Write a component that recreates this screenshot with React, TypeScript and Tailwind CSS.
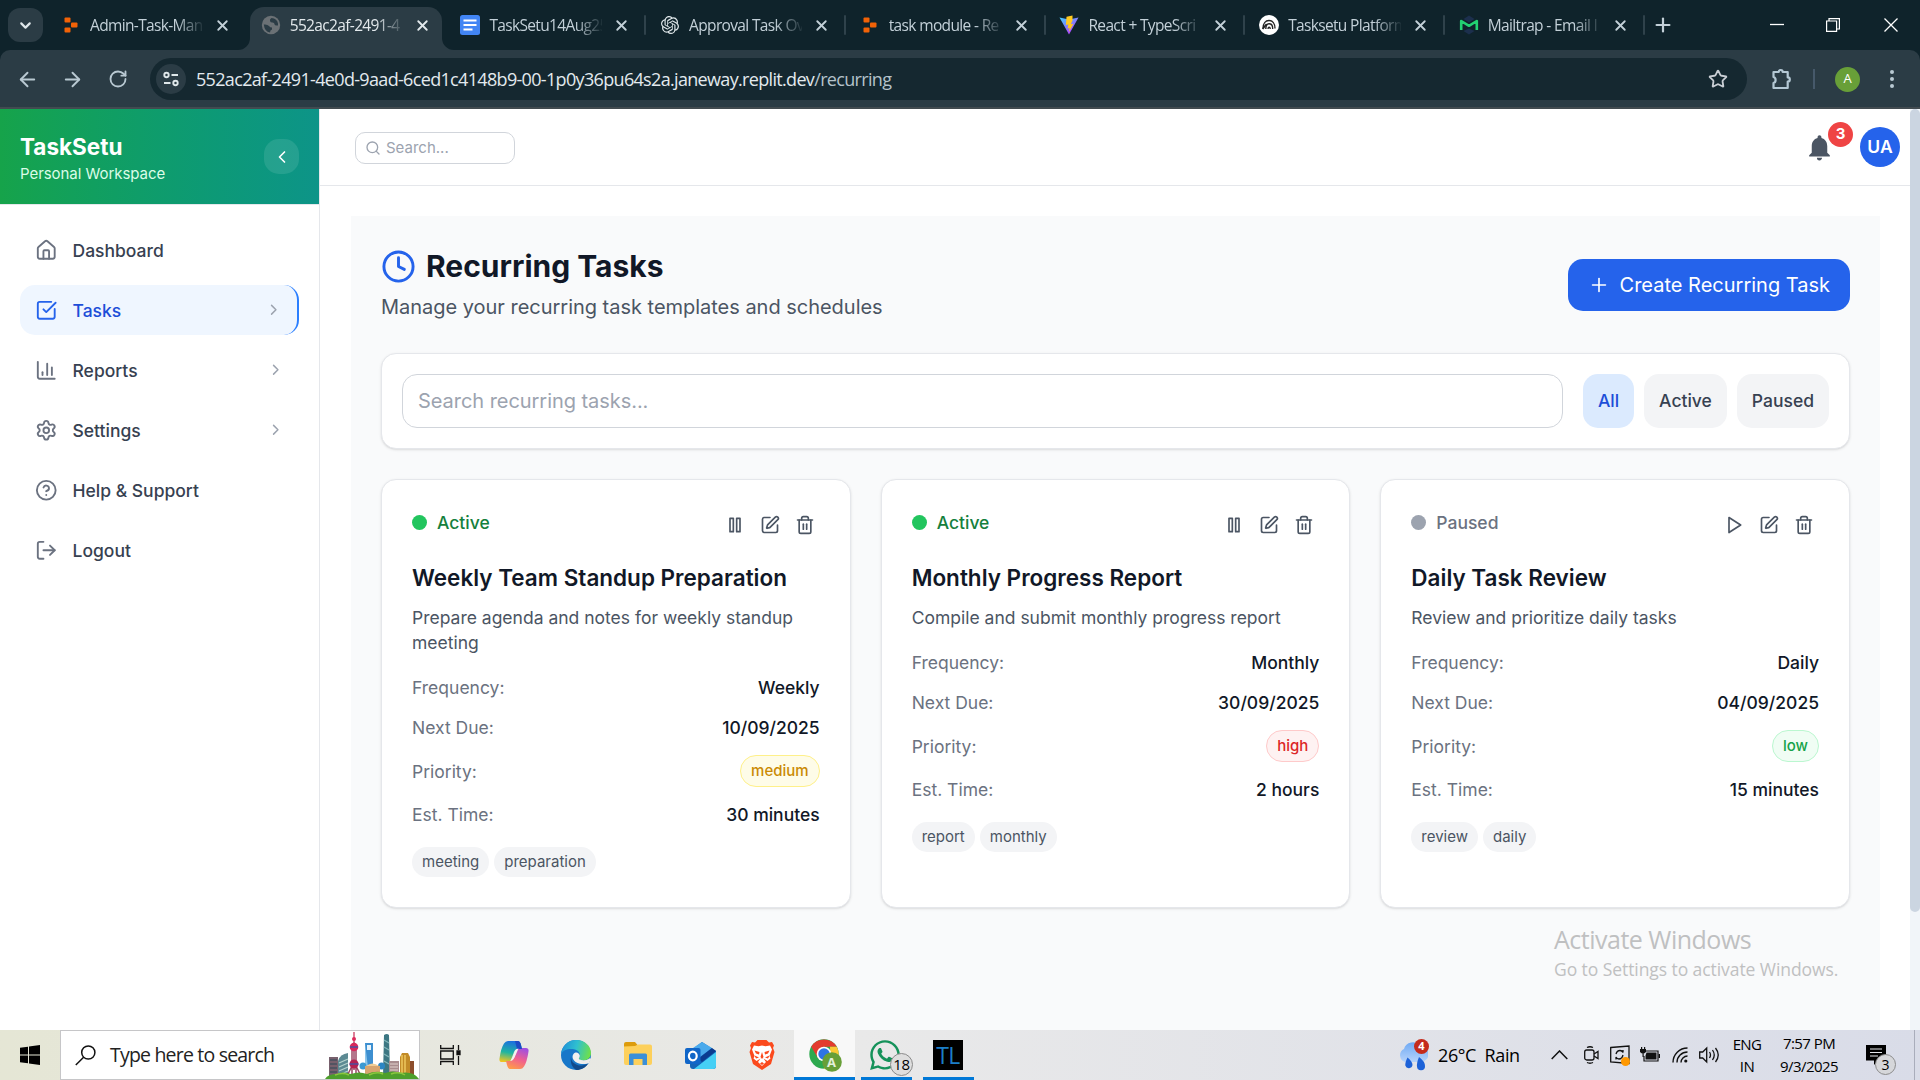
import React from "react";
import {
  House, SquareCheckBig, ChartColumn, Settings, CircleQuestionMark, LogOut, ChevronRight, ChevronLeft,
  Search, Clock, Plus, SquarePen, Trash2, X, ArrowLeft, ArrowRight, ChevronDown, RotateCw, Star,
} from "lucide-react";
import { SiOpenai } from "react-icons/si";
import { FaWhatsapp } from "react-icons/fa";
import { MdNotifications } from "react-icons/md";

/* ---------- Browser chrome ---------- */

const ReplitIcon = () => (
  <svg width="20" height="20" viewBox="0 0 20 20" fill="#f26207">
    <rect x="3.5" y="2.5" width="6" height="5" rx="1" />
    <rect x="10" y="7.6" width="6.5" height="5" rx="1" />
    <rect x="3.5" y="12.6" width="6" height="5" rx="1" />
  </svg>
);

const GlobeIcon = () => (
  <svg width="20" height="20" viewBox="0 0 20 20">
    <circle cx="10" cy="10" r="9.2" fill="#6b7175" />
    <path d="M2.800 9.500q3.500-.5 5.200 1.500 1 1.500 3 1.600v2q-2 .4-2 2.900-5.500-1-6.200-8zM10.500 3q-2 1-1.500 3 .3 1.500 2.500 1.500 2 .2 2 1.800t3.500 1.200q.5-5-4-7z" fill="#2b3c45" />
  </svg>
);

const DocsIcon = () => (
  <svg width="20" height="20" viewBox="0 0 20 20">
    <rect width="20" height="20" rx="2.500" fill="#4285f4" />
    <path d="M3.500 5.500h13M3.500 10h13M3.500 14.500h9" stroke="#fff" strokeWidth="2" />
  </svg>
);

const ViteIcon = () => (
  <svg width="20" height="20" viewBox="0 0 20 20">
    <defs>
      <linearGradient id="vite" x1="0" y1="0" x2="0.700" y2="1">
        <stop offset="0" stopColor="#41d1ff" />
        <stop offset="1" stopColor="#bd34fe" />
      </linearGradient>
    </defs>
    <path d="M.5 2.500l9.500 17 9.500-17L10 4.500z" fill="url(#vite)" />
    <path d="M13.500.5L7.500 1.700l-.6 8.300 2.400-.5-.7 4 2-.6-.8 4.300 4.600-8.400-2.600.4 1.700-3.800z" fill="#ffc91f" />
  </svg>
);

const ArcsIcon = () => (
  <svg width="20" height="20" viewBox="0 0 20 20">
    <circle cx="10" cy="10" r="10" fill="#fff" />
    <path d="M4 13.500c0-5 2.500-8 6-8s6 3 6 8M6.800 14c0-3.500 1.300-5.300 3.200-5.300s3.700 1.800 3.700 5.300M9 14c.2-2.300 2-2.300 2.300 0" stroke="#222" strokeWidth="1.400" fill="none" />
    <path d="M3.600 14l4-5" stroke="#222" strokeWidth="1.800" />
  </svg>
);

const MailtrapIcon = () => (
  <svg width="20" height="20" viewBox="0 0 20 20">
    <path d="M4.500 4L10 .5 15.500 4 10 7.500z M4.500 16l5.500 3.500 5.500-3.500-5.500-2.500z" fill="#1c2f4d" />
    <path d="M2.200 15V6l7.800 4.800L17.800 6v9" stroke="#22d172" strokeWidth="2.600" fill="none" strokeLinejoin="round" />
  </svg>
);

const tabs = [
  { title: "Admin-Task-Man", icon: <ReplitIcon />, sep: false },
  { title: "552ac2af-2491-4", icon: <GlobeIcon />, sep: false, active: true },
  { title: "TaskSetu14Aug25", icon: <DocsIcon />, sep: true },
  { title: "Approval Task Ov", icon: <SiOpenai size={18} color="#dfe7ea" />, sep: true },
  { title: "task module - Re", icon: <ReplitIcon />, sep: true },
  { title: "React + TypeScri", icon: <ViteIcon />, sep: true },
  { title: "Tasksetu Platform", icon: <ArcsIcon />, sep: true },
  { title: "Mailtrap - Email I", icon: <MailtrapIcon />, sep: true },
];

function TabStrip() {
  return (
    <div className="flex h-[50px] shrink-0 items-center bg-[#0f232b] text-[#c3d0d8]">
      <div className="ml-2 flex h-[34px] w-[35px] items-center justify-center rounded-xl bg-[#2b3c45]">
        <ChevronDown size={17} strokeWidth={3} color="#dfe7ea" />
      </div>
      <div className="ml-[7px] flex h-full">
        {tabs.map((t) => (
          <div key={t.title} className="flex h-full w-[199.7px] items-end">
            <div className={t.active ? "relative flex h-[43px] w-[192px] items-center rounded-t-[14px] bg-[#2b3c45] pb-[7px] text-[#e3e9ec]" : "flex h-[43px] w-[192px] items-center pb-[7px]"}>
              {t.active && (
                <>
                  <svg className="absolute bottom-0 -left-3" width="12" height="12"><path d="M12 0v12H0A12 12 0 0 0 12 0z" fill="#2b3c45" /></svg>
                  <svg className="absolute -right-3 bottom-0" width="12" height="12"><path d="M0 0v12h12A12 12 0 0 1 0 0z" fill="#2b3c45" /></svg>
                </>
              )}
              <div className="ml-[11px] flex w-5 shrink-0 justify-center">{t.icon}</div>
              <div className="ml-[9px] w-[113px] shrink-0 text-[15.5px] leading-6 tracking-[-0.65px] whitespace-nowrap [mask-image:linear-gradient(to_right,black_76%,transparent_102%)]">
                {t.title}
              </div>
              <X className="ml-[11px] shrink-0" size={17} strokeWidth={2.6} />
            </div>
            {t.sep && <div className="mb-[15px] ml-[3px] h-5 w-[2px] rounded bg-[#2f424b]" />}
          </div>
        ))}
      </div>
      <Plus className="ml-1" size={22} strokeWidth={2.4} />
      <div className="ml-auto flex items-center text-white">
        <svg width="14" height="14"><path d="M0 6.500h14" stroke="#fff" strokeWidth="1.300" /></svg>
        <svg className="ml-[42px]" width="14" height="14" fill="none" stroke="#fff" strokeWidth="1.200"><path d="M.6 3h10v10.400h-10zM3 3V.6h10.400V11h-2.800" /></svg>
        <svg className="mr-[22px] ml-[44px]" width="14" height="14"><path d="M.5.5l13 13M13.500.5l-13 13" stroke="#fff" strokeWidth="1.300" /></svg>
      </div>
    </div>
  );
}

function Toolbar() {
  return (
    <div className="h-[59px] shrink-0 bg-[#0f232b]">
      <div className="flex h-full items-center rounded-t-[10px] border-b-2 border-[#424b50] bg-[#2b3c45] pt-px text-[#b9c9d2]">
        <ArrowLeft className="ml-4" size={23} strokeWidth={2} />
        <ArrowRight className="ml-[22px]" size={23} strokeWidth={2} />
        <RotateCw className="ml-[24px]" size={20} strokeWidth={2.200} />
        <div className="ml-[22px] flex h-[42px] w-[1597px] items-center rounded-full bg-[#152830]">
          <div className="ml-[6px] flex size-[30px] items-center justify-center rounded-full bg-[#2b3c45]">
            <svg width="18" height="18" viewBox="0 0 18 18" fill="none" stroke="#dfe7ea" strokeWidth="1.900">
              <circle cx="4.500" cy="5" r="2.200" /><path d="M9.500 5H16M2 13h6.500" /><circle cx="13.500" cy="13" r="2.200" />
            </svg>
          </div>
          <div className="ml-[10px] text-[18px] tracking-[-0.67px] whitespace-nowrap text-[#e3eaee]">
            552ac2af-2491-4e0d-9aad-6ced1c4148b9-00-1p0y36pu64s2a.janeway.replit.dev<span className="text-[#b4c2ca]">/recurring</span>
          </div>
          <Star className="mr-[19px] ml-auto" size={20} strokeWidth={2.200} color="#c9ced4" />
        </div>
        <svg className="ml-[23px]" width="24" height="24" viewBox="0 0 24 24" fill="none" stroke="#b4c8d4" strokeWidth="2.200" strokeLinejoin="round">
          <path d="M3.500 5h5.200a2 2 0 0 1 4 0h5v5.400a2 2 0 0 1 0 4.200V21H3.500v-5c2.800-.7 2.800-5.300 0-6z" />
        </svg>
        <div className="ml-[19px] h-5 w-[2px] bg-[#46596a]" />
        <div className="ml-[20px] flex size-[25px] items-center justify-center rounded-full bg-[#689f38] text-[13px] text-white">A</div>
        <svg className="ml-[29px]" width="6" height="20" fill="#b9c9d2"><circle cx="3" cy="3" r="2" /><circle cx="3" cy="10" r="2" /><circle cx="3" cy="17" r="2" /></svg>
      </div>
    </div>
  );
}

/* ---------- Application ---------- */

const nav = [
  { label: "Dashboard", Icon: House },
  { label: "Tasks", Icon: SquareCheckBig, more: true, active: true },
  { label: "Reports", Icon: ChartColumn, more: true },
  { label: "Settings", Icon: Settings, more: true },
  { label: "Help & Support", Icon: CircleQuestionMark },
  { label: "Logout", Icon: LogOut },
];

function Sidebar() {
  return (
    <aside className="flex w-[320px] shrink-0 flex-col border-r border-gray-200 bg-white">
      <div className="flex h-24 items-center justify-between border-b border-gray-200 bg-gradient-to-r from-[#16a34a] to-[#0d9488] px-5">
        <div className="pt-[5px]">
          <div className="text-[22.5px] leading-[30px] font-bold text-white">TaskSetu</div>
          <div className="text-[15px] leading-6 tracking-[-0.05px] text-green-100">Personal Workspace</div>
        </div>
        <div className="flex size-[35px] items-center justify-center rounded-[15px] bg-white/10">
          <ChevronLeft size={20} color="#fff" />
        </div>
      </div>
      <nav className="flex flex-col gap-2.5 px-5 pt-5">
        {nav.map(({ label, Icon, more, active }) => (
          <div
            key={label}
            className={
              active
                ? "flex h-[50px] items-center rounded-[15px] border-r-2 border-blue-500 bg-[#eff6ff] px-[15px] text-[#1d4ed8]"
                : "flex h-[50px] items-center rounded-[15px] px-[15px] text-[#374151]"
            }
          >
            <Icon size={22.5} className={active ? "text-[#2563eb]" : "text-[#6b7280]"} />
            <span className="ml-[15px] pt-[2px] text-[17.5px] font-medium">{label}</span>
            {more && <ChevronRight className="ml-auto text-[#9ca3af]" size={17.5} />}
          </div>
        ))}
      </nav>
    </aside>
  );
}

function TopBar() {
  return (
    <header className="flex h-[77px] shrink-0 items-center justify-between border-b border-[#e5e7eb] pr-2.5 pl-[35px]">
      <div className="mt-[2px] flex h-8 w-[160px] items-center rounded-[10px] border border-[#d1d5db] pl-[9px]">
        <Search size={16} className="text-[#9ca3af]" />
        <span className="ml-[5px] text-[15px] text-[#9ca3af]">Search...</span>
      </div>
      <div className="flex items-center">
        <div className="relative mr-[25px]">
          <MdNotifications size={31} className="text-[#4b5563]" />
          <div className="absolute -top-[10px] left-[24px] flex size-[25px] items-center justify-center rounded-full bg-[#ef4444] text-[15px] font-bold text-white">3</div>
        </div>
        <div className="flex size-10 items-center justify-center rounded-full bg-[#2563eb] pt-px text-[17.5px] font-semibold text-white">UA</div>
      </div>
    </header>
  );
}

type Task = {
  status: "Active" | "Paused";
  title: string;
  desc: string;
  freq: string;
  due: string;
  priority: "medium" | "high" | "low";
  time: string;
  tags: string[];
};

const tasks: Task[] = [
  { status: "Active", title: "Weekly Team Standup Preparation", desc: "Prepare agenda and notes for weekly standup meeting", freq: "Weekly", due: "10/09/2025", priority: "medium", time: "30 minutes", tags: ["meeting", "preparation"] },
  { status: "Active", title: "Monthly Progress Report", desc: "Compile and submit monthly progress report", freq: "Monthly", due: "30/09/2025", priority: "high", time: "2 hours", tags: ["report", "monthly"] },
  { status: "Paused", title: "Daily Task Review", desc: "Review and prioritize daily tasks", freq: "Daily", due: "04/09/2025", priority: "low", time: "15 minutes", tags: ["review", "daily"] },
];

const priorityStyle = {
  medium: "border-[#fef08a] bg-[#fefce8] text-[#ca8a04]",
  high: "border-[#fecaca] bg-[#fef2f2] text-[#dc2626]",
  low: "border-[#bbf7d0] bg-[#f0fdf4] text-[#16a34a]",
};

const PauseIcon = () => (
  <svg width="20" height="20" viewBox="0 0 24 24" fill="none" stroke="currentColor" strokeWidth="2" strokeLinejoin="round">
    <rect x="6" y="4" width="4" height="16" />
    <rect x="14" y="4" width="4" height="16" />
  </svg>
);

const PlayIcon = () => (
  <svg width="20" height="20" viewBox="0 0 24 24" fill="none" stroke="currentColor" strokeWidth="2" strokeLinejoin="round">
    <path d="M6 3l14 9-14 9z" />
  </svg>
);

function Row({ label, children }: { label: string; children: React.ReactNode }) {
  return (
    <div className="flex items-center justify-between">
      <span className="text-[#6b7280]">{label}</span>
      {children}
    </div>
  );
}

function TaskCard({ task }: { task: Task }) {
  const active = task.status === "Active";
  return (
    <div className="rounded-[15px] border border-[#e5e7eb] bg-white p-[30px] text-[17.5px] leading-[25px] shadow-sm">
      <div className="flex items-start justify-between">
        <div className="flex items-center gap-2.5">
          <span className={active ? "size-[15px] rounded-full bg-[#22c55e]" : "size-[15px] rounded-full bg-[#9ca3af]"} />
          <span className={active ? "font-medium text-[#15803d]" : "font-medium text-[#6b7280]"}>{task.status}</span>
        </div>
        <div className="flex gap-[5px] text-[#4b5563]">
          <span className="p-[5px]">{active ? <PauseIcon /> : <PlayIcon />}</span>
          <span className="p-[5px]"><SquarePen size={20} /></span>
          <span className="p-[5px]"><Trash2 size={20} /></span>
        </div>
      </div>
      <h3 className="mt-5 text-[22.5px] leading-[35px] font-semibold text-[#111827]">{task.title}</h3>
      <p className="mt-2.5 text-[#4b5563]">{task.desc}</p>
      <div className="mt-5 flex flex-col gap-[15px] text-[#111827]">
        <Row label="Frequency:"><span className="font-medium">{task.freq}</span></Row>
        <Row label="Next Due:"><span className="font-medium">{task.due}</span></Row>
        <Row label="Priority:">
          <span className={`flex h-8 items-center rounded-full border px-2.5 pb-px text-[15px] font-medium ${priorityStyle[task.priority]}`}>{task.priority}</span>
        </Row>
        <Row label="Est. Time:"><span className="font-medium">{task.time}</span></Row>
      </div>
      <div className="mt-5 flex gap-[5px]">
        {task.tags.map((t) => (
          <span key={t} className="flex h-[30px] items-center rounded-full bg-[#f3f4f6] px-2.5 pb-px text-[15px] text-[#4b5563]">{t}</span>
        ))}
      </div>
    </div>
  );
}

function RecurringTasks() {
  return (
    <div className="flex min-h-0 flex-1 overflow-hidden pt-[30px] pr-[30px] pl-[31px]">
      <div className="w-full bg-[#f9fafb] p-[30px]">
        <div className="flex items-center justify-between">
          <div>
            <div className="flex h-10 items-center">
              <Clock size={35} className="text-[#2563eb]" />
              <h1 className="ml-2.5 text-[30px] leading-10 font-bold text-[#111827]">Recurring Tasks</h1>
            </div>
            <p className="mt-[6px] mb-[1px] text-[20px] leading-[30px] tracking-[-0.02px] text-[#4b5563]">Manage your recurring task templates and schedules</p>
          </div>
          <div className="flex h-[52px] items-center rounded-[15px] bg-[#2563eb] px-5 text-[20px] text-white">
            <Plus size={22} strokeWidth={1.800} />
            <span className="ml-[10px] font-normal">Create Recurring Task</span>
          </div>
        </div>
        <div className="mt-[30px] flex h-24 items-center rounded-[15px] border border-[#e5e7eb] bg-white px-5 shadow-sm">
          <div className="flex h-[54px] flex-1 items-center rounded-[15px] border border-[#d1d5db] px-[15px] text-[20px] tracking-[-0.05px] text-[#9ca3af]">Search recurring tasks...</div>
          <div className="ml-5 flex gap-2.5 text-[17.5px] font-medium text-[#374151]">
            <div className="flex h-[54px] items-center rounded-[15px] bg-[#dbeafe] px-[15px] pt-px text-[#1d4ed8]">All</div>
            <div className="flex h-[54px] items-center rounded-[15px] bg-[#f3f4f6] px-[15px] pt-px">Active</div>
            <div className="flex h-[54px] items-center rounded-[15px] bg-[#f3f4f6] px-[15px] pt-px">Paused</div>
          </div>
        </div>
        <div className="mt-[30px] grid grid-cols-3 gap-[30px]">
          {tasks.map((t) => <TaskCard key={t.title} task={t} />)}
        </div>
      </div>
    </div>
  );
}

/* ---------- Windows taskbar ---------- */

const Skyline = () => (
  <svg width="94" height="49" viewBox="0 0 94 49">
    <rect x="4" y="27" width="9" height="20" fill="#77606d" />
    <path d="M5 30h7M5 34h7M5 38h7M5 42h7" stroke="#47505f" strokeWidth="1.500" />
    <path d="M13 46V31q2-7 10-8v23z" fill="#5c8a93" />
    <path d="M14 33l9-4M14 37l9-4M14 41l9-4M14 45l9-4" stroke="#b4d2cd" strokeWidth="1.300" />
    <path d="M29 2v10" stroke="#c42a52" strokeWidth="1.200" />
    <path d="M29 12v28M27 20v25M31 20v25M27 36l-5 10M31 36l5 10" stroke="#9a4a66" strokeWidth="1.500" />
    <circle cx="29" cy="9" r="2" fill="#dd2c5c" />
    <circle cx="29" cy="17" r="4.300" fill="#d9285b" />
    <circle cx="29" cy="34" r="4.500" fill="#b42352" />
    <path d="M25 17h8M24.500 34h9" stroke="#4a4fa0" strokeWidth="1.300" />
    <path d="M40 46V13h8v33z" fill="#3d8fd0" />
    <path d="M42 15h4v5h-4z" fill="#e9f4fb" />
    <path d="M40 13l4 33h-4z" fill="#8cc6ea" />
    <path d="M58 46l1-41q3-2 5 0l1 41z" fill="#3d7783" />
    <path d="M59 10l5 3M59 17l5 3M59 24l5 3M59 31l5 3" stroke="#83b6ba" strokeWidth="1.300" />
    <circle cx="38" cy="36" r="3.500" fill="#3c9ad3" />
    <circle cx="56.500" cy="36" r="3.500" fill="#2c86c4" />
    <rect x="40" y="36" width="15" height="10" fill="#d7a570" />
    <path d="M41 36q6.500-5 13 0z" fill="#efcd96" />
    <rect x="64" y="31" width="10" height="15" fill="#a98d8f" />
    <path d="M65 34h8M65 37h8M65 40h8" stroke="#e3d3cd" strokeWidth="1" />
    <path d="M75 46V27l2-4h6l2 4v19z" fill="#c28b28" />
    <path d="M77 25v21M80 25v21" stroke="#f1cc63" strokeWidth="1.400" />
    <rect x="85" y="31" width="4" height="15" fill="#8d4e2c" />
    <path d="M0 49q3-5 12-5 6-3 14 0 8-3 16 0 9-4 18-1 8-3 16 0 12-2 18 6z" fill="#4d9f2c" />
    <path d="M10 45q8-3 14 0M44 45q8-4 14-1M66 44q8-3 14 1" stroke="#8cc63e" strokeWidth="1.500" fill="none" />
  </svg>
);

const CopilotIcon = () => (
  <svg width="30" height="30" viewBox="0 0 30 30">
    <defs>
      <linearGradient id="cpa" x1="0.500" y1="0" x2="0.300" y2="1"><stop offset="0" stopColor="#1a6fe0" /><stop offset="0.550" stopColor="#20b5a0" /><stop offset="1" stopColor="#f0c520" /></linearGradient>
      <linearGradient id="cpb" x1="0.700" y1="0" x2="0.300" y2="1"><stop offset="0" stopColor="#a050e0" /><stop offset="0.500" stopColor="#f06090" /><stop offset="1" stopColor="#ff9a4a" /></linearGradient>
    </defs>
    <path d="M9 1h10q2 0 3 4l1 4h-4q-3 0-4 3l-3 8q-1 2-4 2H3q-3 0-2.500-3.500Q2 8 5 3.500 6.500 1 9 1z" fill="url(#cpa)" />
    <path d="M21 29H11q-2 0-3-4l-1-4h4q3 0 4-3l3-8q1-2 4-2h5q3 0 2.500 3.500Q28 22 25 26.500 23.500 29 21 29z" fill="url(#cpb)" />
    <path d="M16 1h3q2 0 3 4l1 4h-5z" fill="#1c4bc4" />
    <path d="M13.500 17.500l3-7.500q1-1.500 3-1.500l-4 9q-1.500 3-4 3z" fill="#f4f3ef" />
  </svg>
);

const EdgeIcon = () => (
  <svg width="30" height="30" viewBox="0 0 30 30">
    <defs>
      <linearGradient id="eg" x1="0" y1="0.300" x2="1" y2="0.500"><stop offset="0" stopColor="#1f8fd8" /><stop offset="0.500" stopColor="#2fc0d0" /><stop offset="1" stopColor="#6fe04a" /></linearGradient>
    </defs>
    <circle cx="15" cy="15" r="15" fill="#1877c9" />
    <path d="M0 14C1 6 7 0 15 0c9 0 15 6 15 13 0 5-4 7.500-8 7.500-3 0-4.500-1-4-2.500 2-2.500 1-7-4-8.500C8 8 2 10 0 14z" fill="url(#eg)" />
    <path d="M10 17c0 6 6 9 11 8.500 3-.3 5-1.500 6.500-2.500C25 27.500 20 30 15.500 30 11 28 9 22 10 17z" fill="#114a8b" />
    <path d="M14.500 12.500c-3 1-4 5-1.500 8 3 3.500 9 4.500 14.500 2l2.500-3.500-3 .5c-3 1.500-8 1-9-.5-.6-1 1-1.500.8-3.500-.2-2-2.300-3.500-4.300-3z" fill="#f1f1ef" />
    <path d="M19 19.500c2 2 7 1.500 10-1.500l1 1-2 4c-4 2-9 1-9-3.500z" fill="#ecebea" />
  </svg>
);

const ExplorerIcon = () => (
  <svg width="28" height="26" viewBox="0 0 28 26">
    <path d="M0 2q0-2 2-2h9l2.500 3V8H0z" fill="#dd9c0c" />
    <path d="M0 4.500l11-.5 3-1.500h12q2 0 2 2V21q0 2-2 2H2q-2 0-2-2z" fill="#fdd05b" />
    <path d="M5 13q0-1.500 1.500-1.500h15q1.500 0 1.500 1.500v10h-4.500v-6h-9v6H5z" fill="#3b8fd8" />
  </svg>
);

const OutlookIcon = () => (
  <svg width="31" height="27" viewBox="0 0 31 27">
    <path d="M17 0l14 9v15q0 3-3 3H8q-3 0-3-3V9z" fill="#1465b8" />
    <path d="M17 0l10 6-16 12-6-7V8z" fill="#4aaaec" />
    <path d="M31 10v14q0 3-3 3H9l13-10z" fill="#45cff5" />
    <path d="M27 6l4 3-14 11-4-3z" fill="#0b3c90" />
    <rect y="6" width="15.500" height="16" rx="2" fill="#1066c8" />
    <ellipse cx="7.800" cy="14" rx="3.900" ry="4.300" fill="none" stroke="#fff" strokeWidth="2.200" />
  </svg>
);

const BraveIcon = () => (
  <svg width="26" height="30" viewBox="0 0 26 30">
    <path d="M8.500 0h9l2.500 2.500 3-.5 2 3.500-1 2.500 1.500 4-3.500 12L13 30 4 24 .5 12 2 8 1 5.500 3 2l3 .5z" fill="#fb4a1d" />
    <path d="M5 5.500l4.500.8L13 5.500l3.500.8 4.500-.8 2 4-2.500 6.500 1 2.500-3 2.500-4-2.500 2.500 3.500-4 4-4-4 2.500-3.500-4 2.500-3-2.500 1-2.500L3 9.500z" fill="#fff" />
    <path d="M5.500 10.500l5 1.500-.5 2.500-3-1zM20.500 10.500l-5 1.500.5 2.500 3-1zM13 12l1.500 5L13 19l-1.500-2zM5.500 15.500l4.500 2-3 1zM20.500 15.500l-4.500 2 3 1zM13 22l2 1.500-2 1.500-2-1.500z" fill="#fb4a1d" />
  </svg>
);

const ChromeIcon = () => (
  <svg width="33" height="33" viewBox="0 0 33 33">
    <circle cx="15" cy="15" r="14.700" fill="#2da94f" />
    <path d="M2.300 7.700A14.700 14.700 0 0 1 27.700 7.700H15v7.300l-6.300 3.700z" fill="#e33b2e" />
    <path d="M27.700 7.700A14.700 14.700 0 0 1 14.500 29.700L21.300 18.700 21 7.700z" fill="#fcc934" />
    <circle cx="15" cy="15" r="7.300" fill="#fff" />
    <circle cx="15" cy="15" r="5.700" fill="#2f74e6" />
    <circle cx="23" cy="23" r="9.800" fill="#689f38" />
  </svg>
);

const WeatherIcon = () => (
  <svg width="30" height="32" viewBox="0 0 30 32">
    <defs><linearGradient id="cl" x1="0" y1="0" x2="0" y2="1"><stop offset="0" stopColor="#6faaf4" /><stop offset="1" stopColor="#b6d3fb" /></linearGradient></defs>
    <path d="M7 23a7 7 0 0 1-1-13A9 9 0 0 1 22 7a8 8 0 0 1 1 16z" fill="url(#cl)" />
    <path d="M9.500 18.500q5 4 5 7.500a3.700 3.700 0 0 1-7.200.5q-.3-3 2.200-8zM21 18q6 4.500 6 9a4 4 0 0 1-8 .5q-.5-3.500 2-9.500z" fill="#1d62d8" />
  </svg>
);

function Underlined({ className, children }: { className: string; children: React.ReactNode }) {
  return <div className={`relative flex h-full items-center justify-center border-b-[3px] border-[#0078d7] pt-[3px] ${className}`}>{children}</div>;
}

function Taskbar() {
  return (
    <div className="flex h-[50px] shrink-0 items-center bg-gradient-to-r from-[#e5e6d5] via-[#e9e9e9] via-45% to-[#d9dce8] text-black">
      <div className="flex w-[60px] justify-center">
        <svg width="20" height="20" viewBox="0 0 20 20"><path d="M0 2.800l8-1.100v7.800H0zM9 1.500L20 0v9.500H9zM0 10.500h8v7.800l-8-1.100zM9 10.500h11V20L9 18.500z" /></svg>
      </div>
      <div className="flex h-full w-[360px] items-center border border-[#c6c6c8] bg-white">
        <svg className="ml-[14px]" width="21" height="21" fill="none" stroke="#111" strokeWidth="1.500"><circle cx="13.300" cy="7.500" r="6.600" /><path d="M8.600 12.200L.8 20" /></svg>
        <span className="ml-[14px] w-[166px] text-[19.5px] tracking-[-0.8px] whitespace-nowrap text-[#222]">Type here to search</span>
        <div className="ml-auto self-end"><Skyline /></div>
      </div>
      <svg className="ml-5" width="21" height="20" fill="none" stroke="#111" strokeWidth="1.300"><path d="M.7 0v3.500h12.600V0M.7 20v-3.500h12.600V20M.7 6h12.600v8H.7zM18.500 0v5M18.500 11v9" /><path d="M17 6h3v3.500h-3z" fill="#111" /></svg>
      <div className="ml-[38px]"><CopilotIcon /></div>
      <div className="ml-[32px]"><EdgeIcon /></div>
      <div className="ml-[33px]"><ExplorerIcon /></div>
      <div className="ml-[33px]"><OutlookIcon /></div>
      <div className="ml-[33px]"><BraveIcon /></div>
      <Underlined className="ml-[19px] w-[61px] bg-[#f8f8f8]">
        <div className="relative ml-[2px]">
          <ChromeIcon />
          <span className="absolute top-[14px] left-[18px] text-[13px] leading-[18px] font-bold text-[#e4f0da]">A</span>
        </div>
      </Underlined>
      <Underlined className="ml-[6px] w-[51px]">
        <FaWhatsapp className="mr-[4px]" size={34} color="#15925a" />
        <span className="absolute top-[23px] left-[29px] flex size-[23px] items-center justify-center rounded-full border border-[#8b8b8b] bg-[#dedede] text-[15px] tracking-tight">18</span>
      </Underlined>
      <Underlined className="ml-[11px] w-[51px]">
        <div className="mr-[1px] flex size-[30px] items-center justify-center bg-black text-[23px] leading-none tracking-tight text-[#1c7fc8]">TL</div>
      </Underlined>

      <div className="relative ml-[424px]">
        <WeatherIcon />
        <span className="absolute top-0 left-[16px] flex size-[15px] items-center justify-center rounded-full bg-[#c42b1c] text-[11px] font-bold text-white">4</span>
      </div>
      <span className="ml-[10px] w-[84px] text-[18px] tracking-[-0.4px] whitespace-pre">26°C  Rain</span>
      <svg className="ml-[29px]" width="17" height="10" fill="none" stroke="#111" strokeWidth="1.500"><path d="M.7 9l7.800-8 7.800 8" /></svg>
      <svg className="ml-[16px]" width="15" height="18" fill="none" stroke="#111" strokeWidth="1.300"><path d="M3 1.500q3-1.500 6 0M3 16.500q3 1.500 6 0" /><rect x=".7" y="4" width="9.300" height="10" rx="2" /><path d="M10 8l4-2.500v7L10 10" /></svg>
      <div className="relative ml-[11px]">
        <svg width="20" height="20" fill="none" stroke="#111" strokeWidth="1.300"><path d="M.7 2.500L19 1v17.500L.7 17zM6 9q1-3.500 4-3.500 2 0 3 2V5M13 10q-1 4-4 4-2 0-3-2v2.500" /></svg>
        <span className="absolute right-0 -bottom-[1px] size-[9px] rounded-full bg-[#ff9800]" />
      </div>
      <svg className="ml-[10px]" width="20" height="16"><path d="M6 4h12v10H4V9" fill="none" stroke="#111" strokeWidth="1.200" /><path d="M6.500 5.500h10v7h-11v-4zM18.500 7h1.500v4h-1.500zM0 2h6v3q-3 3-6 0zM1 0h1.200v2H1zM4 0h1.200v2H4zM2.500 6h1.200v4H2.500z" fill="#111" /></svg>
      <svg className="ml-[12px]" width="17" height="17" fill="none" stroke="#111" strokeWidth="1.400"><path d="M1 15.500A14.500 14.500 0 0 1 15.500 1M5 15.500A10.500 10.500 0 0 1 15.500 5M9 15.500a6.500 6.500 0 0 1 6.500-6.500" /><circle cx="13.800" cy="14" r="1.600" fill="#111" stroke="none" /></svg>
      <svg className="ml-[10px]" width="21" height="18" fill="none" stroke="#111" strokeWidth="1.300"><path d="M.7 6h3l4-4v14l-4-4h-3zM10.500 6q2 3 0 6M13.500 4q3.500 5 0 10M16.500 2q5.500 7 0 14" /></svg>
      <div className="ml-[11px] w-[32px] text-center text-[15px] leading-[22px] tracking-[-0.6px]">ENG<br />IN</div>
      <div className="ml-[9px] w-[74px] text-center text-[15px] leading-[23px] tracking-[-0.55px] whitespace-nowrap">7:57 PM<br />9/3/2025</div>
      <div className="relative ml-[20px]">
        <svg width="20" height="20"><path d="M0 0h20v15.500h-8L8 20v-4.500H0z" fill="#000" /><path d="M4 4h12M4 7.500h12M4 11h8" stroke="#e3e5ea" strokeWidth="1.200" /></svg>
        <span className="absolute top-[9px] left-[9px] flex size-[21px] items-center justify-center rounded-full border border-[#8b8b8b] bg-[#d6d7da] text-[14px]">3</span>
      </div>
      <div className="mr-[5px] ml-auto h-full w-px bg-[#a9adbb]" />
    </div>
  );
}

export default function App() {
  return (
    <div className="relative flex h-[1080px] w-[1920px] flex-col overflow-hidden bg-white font-['Open_Sans','Noto_Sans',sans-serif]">
      <TabStrip />
      <Toolbar />
      <div className="flex min-h-0 flex-1 font-['Inter',sans-serif]">
        <Sidebar />
        <main className="flex min-w-0 flex-1 flex-col">
          <TopBar />
          <RecurringTasks />
        </main>
        <div className="w-2.5 bg-[#f1f5f9]">
          <div className="h-[803px] rounded-full bg-[#cbd5e1]" />
        </div>
      </div>
      <Taskbar />
      <div className="absolute top-[920px] left-[1554px] whitespace-nowrap text-[#bfc0c1]">
        <div className="text-[25px] leading-[38px] tracking-[-0.5px]">Activate Windows</div>
        <div className="text-[17.5px] leading-[22px] tracking-[-0.07px]">Go to Settings to activate Windows.</div>
      </div>
    </div>
  );
}
